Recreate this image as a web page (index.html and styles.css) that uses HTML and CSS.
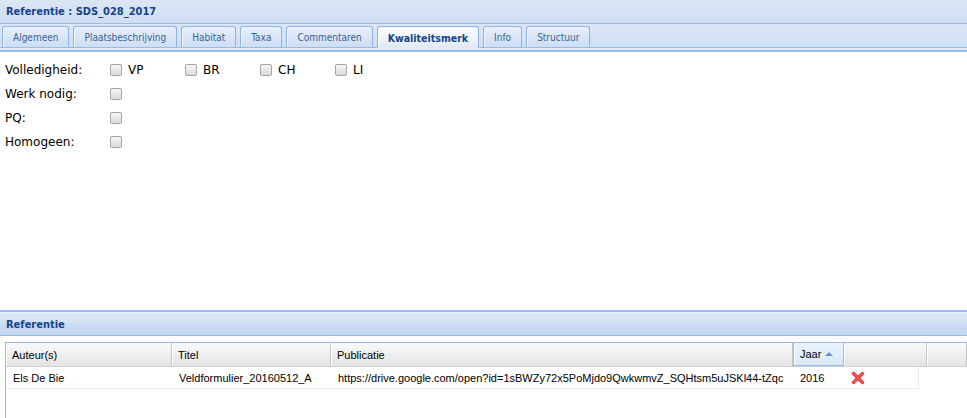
FILE: index.html
```html
<!DOCTYPE html>
<html>
<head>
<meta charset="utf-8">
<link rel="stylesheet" href="styles.css">
</head>
<body>
<div class="page">
  <div class="panel-header"><span class="panel-title">Referentie : SDS_028_2017</span></div>
  <div class="tabbar">
    <div class="tabs">
      <div class="tab">Algemeen</div>
      <div class="tab">Plaatsbeschrijving</div>
      <div class="tab">Habitat</div>
      <div class="tab">Taxa</div>
      <div class="tab">Commentaren</div>
      <div class="tab active">Kwaliteitsmerk</div>
      <div class="tab">Info</div>
      <div class="tab">Structuur</div>
    </div>
    <div class="strip"></div>
  </div>
  <div class="form">
    <div class="row">
      <div class="label">Volledigheid:</div>
      <div class="checks">
        <label class="cb"><span class="box"></span>VP</label>
        <label class="cb"><span class="box"></span>BR</label>
        <label class="cb"><span class="box"></span>CH</label>
        <label class="cb"><span class="box"></span>LI</label>
      </div>
    </div>
    <div class="row"><div class="label">Werk nodig:</div><div class="checks"><span class="box"></span></div></div>
    <div class="row"><div class="label">PQ:</div><div class="checks"><span class="box"></span></div></div>
    <div class="row"><div class="label">Homogeen:</div><div class="checks"><span class="box"></span></div></div>
  </div>
  <div class="sub-panel">
    <div class="sub-header"><span class="panel-title">Referentie</span></div>
    <div class="sub-body">
      <div class="grid">
        <div class="grid-head">
          <div class="hc c1">Auteur(s)</div>
          <div class="hc c2">Titel</div>
          <div class="hc c3">Publicatie</div>
          <div class="hc c4 sorted">Jaar <span class="arrow"></span></div>
          <div class="hc c5"></div>
          <div class="hc c6"></div>
        </div>
        <div class="grid-row">
          <div class="dc c1">Els De Bie</div>
          <div class="dc c2">Veldformulier_20160512_A</div>
          <div class="dc c3">https://drive.google.com/open?id=1sBWZy72x5PoMjdo9QwkwmvZ_SQHtsm5uJSKl44-tZqc</div>
          <div class="dc c4">2016</div>
          <div class="dc c5"><svg class="del" width="14" height="14" viewBox="0 0 14 14"><path d="M2.5 2.5 L11.5 11.5 M11.5 2.5 L2.5 11.5" stroke="#e8383d" stroke-width="3.4" stroke-linecap="round"/><path d="M2.5 2.5 L11.5 11.5 M11.5 2.5 L2.5 11.5" stroke="#f47c7f" stroke-width="1.2" stroke-linecap="round" opacity="0.6"/></svg></div>
        </div>
      </div>
    </div>
  </div>
</div>
</body>
</html>
```
FILE: styles.css
```css
* { box-sizing: border-box; }
html, body { margin: 0; padding: 0; background: #fff; overflow: hidden; }
body { width: 967px; height: 418px; font-family: "DejaVu Sans", sans-serif; font-size: 12px; color: #000; }
.page { display: flex; flex-direction: column; height: 418px; }
.panel-header {
  height: 24px;
  background: linear-gradient(#dae6f4, #d0def0);
  border-bottom: 1px solid #99bbe8;
  display: flex; align-items: center;
  padding-left: 6px;
}
.panel-title { font-family: "DejaVu Sans Condensed", "DejaVu Sans", sans-serif; font-weight: bold; font-size: 11px; color: #15428b; }
.tabbar { background: linear-gradient(#dbe6f5, #cedef2); position: relative; }
.tabs { display: flex; gap: 4px; padding: 2px 0 0 2px; height: 23px; }
.tab {
  height: 21px;
  padding: 0 10px;
  display: flex; align-items: center;
  font-family: "DejaVu Sans Condensed", "DejaVu Sans", sans-serif;
  font-size: 10px; color: #3b5f94;
  border: 1px solid #8db2e3; border-bottom: none;
  border-radius: 3px 3px 0 0;
  background: linear-gradient(#e6eefa, #cedef4);
  box-shadow: inset 1px 1px 0 #f0f5fc;
}
.tab.active {
  height: 22px;
  position: relative; z-index: 2;
  font-weight: bold; color: #15428b;
  font-size: 10.5px;
  background: linear-gradient(#ffffff, #dfe9f7);
  padding: 0 10px;
}
.strip {
  height: 5px;
  border-top: 1px solid #99bbe8;
  border-bottom: 2px solid #99bbe8;
  background: #dfe8f6;
}
.form { flex: 1 1 auto; padding: 6px 0 0 5px; }
.row { display: flex; align-items: center; height: 24px; }
.label { width: 105px; color: #000; }
.checks { display: flex; }
.cb { display: flex; align-items: center; width: 75px; }
.box {
  display: inline-block; width: 12px; height: 12px;
  border: 1px solid #a5a5a5; border-radius: 2px;
  background: linear-gradient(#f5f5f5, #dcdcdc);
  margin-right: 6px;
}
.sub-panel { height: 108px; border-top: 2px solid #99bbe8; flex: none; }
.sub-header {
  height: 24px;
  background: linear-gradient(#dbe7f6 0%, #d3e2f4 45%, #c9dbf1 50%, #c6d8f0 100%);
  border-top: 1px solid #e8f0fa;
  border-bottom: 1px solid #99bbe8;
  display: flex; align-items: center; padding-left: 6px;
}
.sub-body { padding: 6px 0 0 5px; }
.grid { border-top: 1px solid #99bbe8; border-left: 1px solid #99bbe8; height: 80px; }
.grid-head { display: flex; height: 24px; background: linear-gradient(#f9f9f9, #e3e4e6); border-bottom: 1px solid #d0d0d0; }
.hc {
  font-family: "Liberation Sans", Arial, sans-serif; font-size: 11px; color: #000;
  display: flex; align-items: center; padding-left: 6px;
  border-right: 1px solid #c5c5c5; box-shadow: inset 1px 0 0 #fff;
}
.hc.sorted { background: linear-gradient(#ebf3fd, #d9e8fb); border: 1px solid #99bbe8; border-top: none; }
.arrow { display: inline-block; width: 0; height: 0; border-left: 4px solid transparent; border-right: 4px solid transparent; border-bottom: 4px solid #6a8fc5; margin-left: 4px; }
.c1 { width: 166px; }
.c2 { width: 159px; }
.c3 { width: 462px; }
.c4 { width: 51px; }
.c5 { width: 83px; }
.c6 { flex: 1; }
.grid-row { display: flex; height: 22px; width: 913px; border-bottom: 1px solid #ededed; border-right: 1px solid #ededed; }
.dc { font-family: "Liberation Sans", Arial, sans-serif; font-size: 11px; display: flex; align-items: center; padding-left: 7px; white-space: nowrap; overflow: hidden; }
.grid-row .c5 { width: auto; flex: 1; padding-left: 7px; }
.del { display: block; }
```
